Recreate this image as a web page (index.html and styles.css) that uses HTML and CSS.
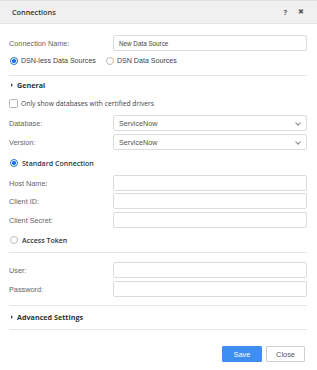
FILE: index.html
```html
<!DOCTYPE html>
<html>
<head>
<meta charset="utf-8">
<link rel="stylesheet" href="styles.css">
</head>
<body>
<div class="dialog">
  <div class="header">
    <span class="title">Connections</span>
    <span class="hicons"><span class="help">?</span><span class="x">&#x2716;</span></span>
  </div>
  <div class="content">
    <div class="field first"><div class="label">Connection Name:</div><div class="input">New Data Source</div></div>
    <div class="radios top-radios">
      <span class="opt"><span class="radio on"></span>DSN-less Data Sources</span>
      <span class="opt"><span class="radio"></span>DSN Data Sources</span>
    </div>
    <div class="divider d1"></div>
    <div class="section s-general"><span class="tri"></span>General</div>
    <div class="check-row"><span class="checkbox"></span>Only show databases with certified drivers</div>
    <div class="field m7"><div class="label">Database:</div><div class="input select">ServiceNow<span class="chev"></span></div></div>
    <div class="field m3"><div class="label">Version:</div><div class="input select">ServiceNow<span class="chev"></span></div></div>
    <div class="radio-head m8"><span class="radio on"></span>Standard Connection</div>
    <div class="field m7"><div class="label">Host Name:</div><div class="input"></div></div>
    <div class="field m2"><div class="label">Client ID:</div><div class="input"></div></div>
    <div class="field m3"><div class="label">Client Secret:</div><div class="input"></div></div>
    <div class="radio-head m7"><span class="radio"></span>Access Token</div>
    <div class="divider m7"></div>
    <div class="field m9"><div class="label">User:</div><div class="input"></div></div>
    <div class="field m3"><div class="label">Password:</div><div class="input"></div></div>
    <div class="divider m8"></div>
    <div class="section s-adv"><span class="tri"></span>Advanced Settings</div>
    <div class="divider m7"></div>
    <div class="buttons">
      <button class="btn save">Save</button>
      <button class="btn close">Close</button>
    </div>
  </div>
</div>
</body>
</html>
```

FILE: styles.css
```css
html, body {
  margin: 0;
  padding: 0;
  background: #ffffff;
}
.dialog {
  width: 317px;
  height: 370px;
  font-family: "Liberation Sans", Arial, sans-serif;
  color: #333;
  box-sizing: border-box;
}
.header {
  height: 24px;
  box-sizing: border-box;
  background: #f0f0f0;
  border-top: 1px solid #e2e2e2;
  border-bottom: 1px solid #e4e4e4;
  display: flex;
  align-items: center;
  justify-content: space-between;
  padding: 0 12px 0 12px;
}
.title {
  font-family: "Open Sans", sans-serif;
  font-weight: 600;
  font-size: 7.3px;
  color: #333;
}
.hicons {
  display: flex;
  align-items: center;
  gap: 11px;
  margin-right: 1px;
}
.help {
  font-family: "Open Sans", sans-serif;
  font-weight: 700;
  font-size: 7.5px;
  color: #555;
}
.x {
  font-size: 6.5px;
  color: #555;
}
.content {
  padding: 11px 10px 0 9px;
  display: flex;
  flex-direction: column;
}
.field {
  display: flex;
  align-items: center;
  height: 16px;
}
.label {
  width: 104px;
  flex: none;
  font-size: 7.3px;
  color: #666;
}
.input {
  flex: 1;
  height: 16px;
  box-sizing: border-box;
  border: 1px solid #dcdcdc;
  border-radius: 2px;
  background: #fff;
  font-size: 6.3px;
  color: #444;
  display: flex;
  align-items: center;
  padding-left: 5px;
  position: relative;
}
.select {
  font-size: 7.2px;
  color: #555;
}
.chev {
  position: absolute;
  right: 6px;
  top: 5px;
  width: 3px;
  height: 3px;
  border-right: 1px solid #888;
  border-bottom: 1px solid #888;
  transform: rotate(45deg);
}
.radios {
  display: flex;
  align-items: center;
  height: 10px;
  margin-top: 5px;
  font-size: 7.1px;
  color: #444;
}
.opt {
  display: flex;
  align-items: center;
  margin-right: 9px;
}
.radio {
  width: 6px;
  height: 6px;
  border-radius: 50%;
  border: 1px solid #bbb;
  background: #fff;
  margin: 0 3px 0 1px;
  box-sizing: content-box;
  flex: none;
}
.radio.on {
  border: 1px solid #1a73e8;
  background: radial-gradient(circle, #1a73e8 0 1.8px, #fff 2.3px);
}
.divider {
  height: 1px;
  background: #e6e6e6;
}
.d1 { margin-top: 9px; }
.section {
  height: 10px;
  display: flex;
  align-items: center;
  font-family: "Open Sans", sans-serif;
  font-weight: 700;
  font-size: 7.2px;
  color: #333;
}
.s-general { margin-top: 4px; }
.s-adv { margin-top: 6px; }
.tri {
  width: 0;
  height: 0;
  border-left: 2.5px solid #555;
  border-top: 2px solid transparent;
  border-bottom: 2px solid transparent;
  margin: 0 4px 0 2px;
}
.check-row {
  height: 10px;
  margin-top: 8px;
  display: flex;
  align-items: center;
  font-family: "Open Sans", sans-serif;
  font-size: 6.75px;
  color: #444;
}
.checkbox {
  width: 7px;
  height: 7px;
  border: 1px solid #b5b5b5;
  border-radius: 1.5px;
  margin-right: 3px;
  flex: none;
}
.radio-head {
  height: 10px;
  display: flex;
  align-items: center;
  font-family: "Open Sans", sans-serif;
  font-weight: 600;
  font-size: 7.05px;
  color: #333;
}
.radio-head .radio { margin-right: 4px; }
.m2 { margin-top: 2px; }
.m3 { margin-top: 3px; }
.m7 { margin-top: 7px; }
.m8 { margin-top: 8px; }
.m9 { margin-top: 9px; }
.buttons {
  margin-top: 16px;
  display: flex;
  justify-content: flex-end;
  gap: 4px;
  padding-right: 2px;
}
.btn {
  height: 16px;
  box-sizing: border-box;
  font-family: "Liberation Sans", Arial, sans-serif;
  font-size: 7.4px;
  border-radius: 1px;
  padding: 0;
}
.save {
  width: 40px;
  background: #3d8ef0;
  border: 1px solid #3d8ef0;
  color: #fff;
}
.close {
  width: 39px;
  background: #fff;
  border: 1px solid #cfcfcf;
  color: #555;
}
```
